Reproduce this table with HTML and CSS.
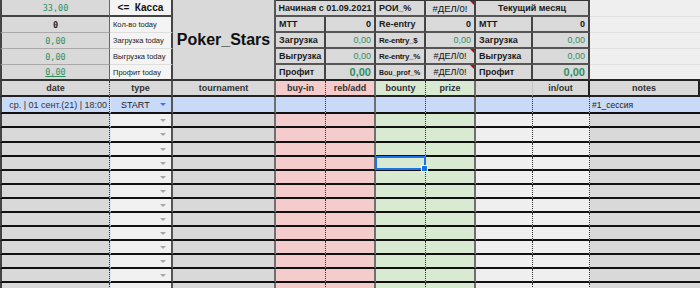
FILE: index.html
```html
<!DOCTYPE html>
<html lang="ru">
<head>
<meta charset="utf-8">
<title>Poker_Stars</title>
<link rel="stylesheet" href="styles.css">
</head>
<body>
<div class="sheet">
  <div class="top">
    <div class="ta first">33,00</div>
    <div class="tb kassa">&lt;=&nbsp;&nbsp;Касса</div>
    <div class="tc">Poker_Stars</div>
    <div class="bx span2 hd">Начиная с 01.09.2021</div>
    <div class="bx hd left">РОИ_%</div>
    <div class="bx hd err first-err">#ДЕЛ/0!</div>
    <div class="bx span2 hd">Текущий месяц</div>
    <div class="tj"></div>

    <div class="ta black">0</div>
    <div class="tb">Кол-во today</div>
    <div class="bx">МТТ</div>
    <div class="bx val bold">0</div>
    <div class="bx">Re-entry</div>
    <div class="bx val bold">0</div>
    <div class="bx">MTT</div>
    <div class="bx val bold">0</div>
    <div class="tj"></div>

    <div class="ta">0,00</div>
    <div class="tb">Загрузка today</div>
    <div class="bx">Загрузка</div>
    <div class="bx val green">0,00</div>
    <div class="bx narrow">Re-entry_$</div>
    <div class="bx val green">0,00</div>
    <div class="bx">Загрузка</div>
    <div class="bx val green">0,00</div>
    <div class="tj"></div>

    <div class="ta">0,00</div>
    <div class="tb">Выгрузка today</div>
    <div class="bx">Выгрузка</div>
    <div class="bx val green">0,00</div>
    <div class="bx narrow">Re-entry_%</div>
    <div class="bx err">#ДЕЛ/0!</div>
    <div class="bx">Выгрузка</div>
    <div class="bx val green">0,00</div>
    <div class="tj"></div>

    <div class="ta last"><u>0,00</u></div>
    <div class="tb last">Профит today</div>
    <div class="bx last">Профит</div>
    <div class="bx last val green big">0,00</div>
    <div class="bx last tiny">Bou_prof_%</div>
    <div class="bx last err">#ДЕЛ/0!</div>
    <div class="bx last">Профит</div>
    <div class="bx last val green big">0,00</div>
    <div class="tj last"></div>
  </div>

  <div class="row hdr">
    <span>date</span><span>type</span><span>tournament</span><span>buy-in</span><span>reb/add</span><span>bounty</span><span>prize</span><span></span><span>in/out</span><span>notes</span>
  </div>

  <div class="row blue">
    <span class="date">ср. | 01 сент.(21) | 18:00</span><span class="type">START<i class="arr on"></i></span><span></span><span></span><span></span><span></span><span></span><span></span><span></span><span class="note">#1_сессия</span>
  </div>

  <div class="row"><span></span><span><i class="arr"></i></span><span></span><span></span><span></span><span></span><span></span><span></span><span></span><span></span></div>
  <div class="row tall"><span></span><span><i class="arr"></i></span><span></span><span></span><span></span><span></span><span></span><span></span><span></span><span></span></div>
  <div class="row"><span></span><span><i class="arr"></i></span><span></span><span></span><span></span><span></span><span></span><span></span><span></span><span></span></div>
  <div class="row"><span></span><span><i class="arr"></i></span><span></span><span></span><span></span><span class="picked"><i class="selbox"><b class="handle"></b></i></span><span></span><span></span><span></span><span></span></div>
  <div class="row"><span></span><span><i class="arr"></i></span><span></span><span></span><span></span><span></span><span></span><span></span><span></span><span></span></div>
  <div class="row"><span></span><span><i class="arr"></i></span><span></span><span></span><span></span><span></span><span></span><span></span><span></span><span></span></div>
  <div class="row"><span></span><span><i class="arr"></i></span><span></span><span></span><span></span><span></span><span></span><span></span><span></span><span></span></div>
  <div class="row"><span></span><span><i class="arr"></i></span><span></span><span></span><span></span><span></span><span></span><span></span><span></span><span></span></div>
  <div class="row"><span></span><span><i class="arr"></i></span><span></span><span></span><span></span><span></span><span></span><span></span><span></span><span></span></div>
  <div class="row"><span></span><span><i class="arr"></i></span><span></span><span></span><span></span><span></span><span></span><span></span><span></span><span></span></div>
  <div class="row"><span></span><span><i class="arr"></i></span><span></span><span></span><span></span><span></span><span></span><span></span><span></span><span></span></div>
  <div class="row"><span></span><span><i class="arr"></i></span><span></span><span></span><span></span><span></span><span></span><span></span><span></span><span></span></div>
  <div class="row"><span></span><span><i class="arr"></i></span><span></span><span></span><span></span><span></span><span></span><span></span><span></span><span></span></div>
</div>
</body>
</html>
```
FILE: styles.css
```css
body {
  margin: 0;
  background: #ffffff;
}

.sheet {
  width: 700px;
  height: 288px;
  overflow: hidden;
  font-family: "Liberation Sans", Arial, sans-serif;
  color: #222;
}

.top,
.row {
  display: grid;
  grid-template-columns: 110px 63px 103px 50px 50px 50px 50px 57px 57px 110px;
}

.top {
  grid-template-rows: 17px 16px 16px 16px 16px;
}

.top > div,
.row > span {
  box-sizing: border-box;
  display: flex;
  align-items: center;
  min-width: 0;
  overflow: hidden;
  white-space: nowrap;
}

/* column A, top block */
.ta {
  background: #d9d9d9;
  border-left: 2px solid #444;
  border-right: 1px solid #666;
  border-bottom: 1px solid #a8a8a8;
  justify-content: center;
  font-family: "DejaVu Sans Mono", "Liberation Mono", monospace;
  font-size: 8.5px;
  color: #2f8f5f;
}
.ta.first { border-bottom: 2px solid #444; }
.ta.last { border-bottom: 2px solid #333; }
.ta.black { color: #222; font-weight: bold; }

/* column B, top block */
.tb {
  background: #f4f4f4;
  border-right: 2px solid #444;
  border-bottom: 1px solid #dedede;
  font-size: 7.5px;
  padding-left: 3px;
  color: #1a1a1a;
}
.tb.kassa {
  font-size: 10px;
  font-weight: bold;
  justify-content: center;
  padding-left: 0;
  border-bottom: 2px solid #444;
  color: #111;
}
.tb.last { border-bottom: 2px solid #333; }

/* column C, top block */
.tc {
  grid-row: span 5;
  background: #d9d9d9;
  border-right: 2px solid #555;
  border-bottom: 2px solid #333;
  justify-content: center;
  font-size: 16px;
  font-weight: bold;
  color: #111;
}

/* boxed summary blocks */
.bx {
  position: relative;
  background: #d9d9d9;
  border-right: 2px solid #444;
  border-bottom: 2px solid #555;
  padding: 0 3px;
  font-size: 9px;
  font-weight: bold;
  color: #1a1a1a;
}
.bx.hd {
  border-top: 1px solid #333;
  justify-content: center;
}
.bx.hd.left { justify-content: flex-start; font-weight: bold; }
.bx.last { border-bottom: 2px solid #222; }
.span2 { grid-column: span 2; }
.bx.val {
  justify-content: flex-end;
  font-weight: normal;
  font-size: 9px;
}
.bx.bold { font-weight: bold; color: #111; }
.green { color: #2f8f5f; }
.bx.big { font-size: 11px; font-weight: bold; }
.bx.narrow { font-size: 8px; letter-spacing: -0.3px; padding-right: 0; }
.bx.tiny { font-size: 7px; }
.bx.err {
  justify-content: center;
  font-weight: normal;
  font-size: 9px;
  color: #111;
}
.bx.err.first-err { font-size: 9.5px; }
.bx.err::after {
  content: "";
  position: absolute;
  top: 0;
  right: 0;
  border-top: 4px solid #d10000;
  border-left: 4px solid transparent;
}

/* column J, top block */
.tj {
  background: #efefef;
  border-bottom: 1px solid #e0e0e0;
}
.tj.last { border-bottom: 2px solid #222; }

/* grid rows */
.row { height: 14px; }
.row.tall { height: 15px; }
.row.hdr { height: 16px; }
.row.blue { height: 17px; }

.row > span { border-bottom: 2px solid #111; }
.row > span:nth-child(1) {
  background: #d9d9d9;
  border-left: 2px solid #444;
  border-right: 1px dotted #333;
}
.row > span:nth-child(2) {
  background: #f1f1f1;
  border-left: 1px solid #dbe4f2;
  border-right: 2px solid #555;
}
.row > span:nth-child(3) {
  background: #d9d9d9;
  border-right: 2px solid #6f6f6f;
}
.row > span:nth-child(4) {
  background: #f4cccc;
  border-right: 1px dotted #333;
}
.row > span:nth-child(5) {
  background: #f4cccc;
  border-right: 2px solid #6f6f6f;
}
.row > span:nth-child(6) {
  background: #d9ead3;
  border-right: 1px dotted #333;
}
.row > span:nth-child(7) {
  background: #d9ead3;
  border-right: 2px solid #6f6f6f;
}
.row > span:nth-child(8) {
  background: #efefef;
  border-right: 1px dotted #333;
}
.row > span:nth-child(9) {
  background: #efefef;
  border-right: 1px dotted #333;
}
.row > span:nth-child(10) {
  background: #d9d9d9;
}

/* header row */
.row.hdr > span {
  justify-content: center;
  font-size: 9px;
  font-weight: bold;
  color: #333;
  border-bottom: 2px solid #222;
}
.row.hdr > span:nth-child(2) {
  background: #d9d9d9;
  border-left: 0;
}
.row.hdr > span:nth-child(8) {
  background: #d9d9d9;
  border-right: 1px solid #c4c4c4;
}
.row.hdr > span:nth-child(9) {
  background: #d9d9d9;
  border-right: 2px solid #222;
}
.row.hdr > span:nth-child(10) {
  border-right: 2px solid #222;
}

/* selected (blue) row */
.row.blue > span { background: #c9daf8; }
.date {
  justify-content: flex-end;
  padding-right: 2px;
  font-size: 9px;
  color: #333;
}
.type {
  padding-left: 10px;
  font-size: 9px;
  color: #1a1a1a;
}
.note {
  padding-left: 2px;
  font-size: 8.5px;
  color: #222;
}

/* dropdown arrows */
.arr {
  margin-left: auto;
  margin-right: 5px;
  width: 0;
  height: 0;
  border-left: 3px solid transparent;
  border-right: 3px solid transparent;
  border-top: 3px solid #a6a6a6;
}
.arr.on { border-top-color: #3b78e7; }

/* active cell */
.row > span.picked {
  position: relative;
  overflow: visible;
}
.selbox {
  position: absolute;
  left: -1px;
  top: -1px;
  right: -1px;
  bottom: -1px;
  border: 2px solid #1a73e8;
  z-index: 2;
}
.handle {
  position: absolute;
  right: -4px;
  bottom: -4px;
  width: 5px;
  height: 5px;
  background: #1a73e8;
  border: 1px solid #fff;
}
```
